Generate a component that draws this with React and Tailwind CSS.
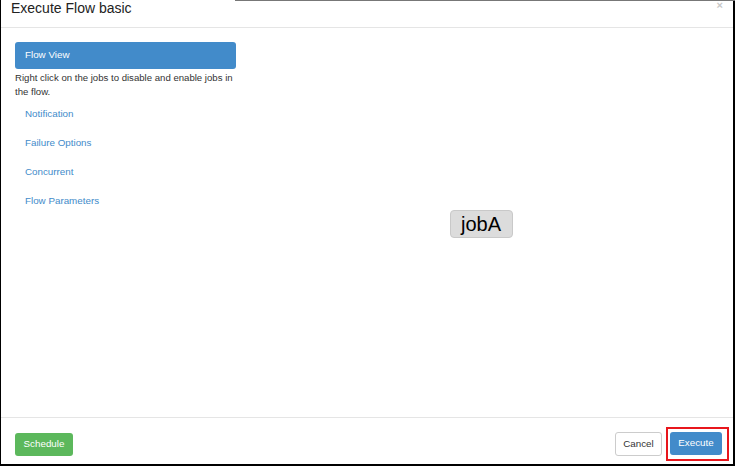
import React from 'react';

const navItems = ['Notification', 'Failure Options', 'Concurrent', 'Flow Parameters'];

export default function App() {
  return (
    <div
      className="w-[735px] h-[467px] bg-white text-[#333] relative"
      style={{ fontFamily: '"Liberation Sans", Arial, sans-serif' }}
    >
      {/* stray top edge of the window behind */}
      <div className="absolute top-0 left-[235px] right-0 h-px bg-[#777]" />

      <div className="h-[466px] flex flex-col border-l border-r-2 border-b-2 border-black">
        {/* Header */}
        <div className="h-[28px] shrink-0 flex items-start justify-between border-b border-[#e5e5e5] pl-[10px] pr-[10px]">
          <h4 className="text-[14px] leading-[14px] pt-[1px] text-[#222]">Execute Flow basic</h4>
          <span className="text-[11px] leading-[11px] font-bold text-[#c8c8c8]">×</span>
        </div>

        {/* Body */}
        <div className="flex-1 flex">
          <div className="w-[235px] shrink-0 pl-[14px] pt-[14px]">
            <div className="h-[27px] w-[221px] flex items-center pl-[10px] rounded-[3px] bg-[#428bca] text-white text-[9.8px]">
              Flow View
            </div>
            <p className="w-[224px] mt-[2px] text-[9.6px] leading-[14px] text-[#333]">
              Right click on the jobs to disable and enable jobs in the flow.
            </p>
            <ul className="mt-px flex flex-col gap-px">
              {navItems.map((item) => (
                <li key={item} className="h-[28px] flex items-center pl-[10px] text-[9.8px] text-[#428bca]">
                  {item}
                </li>
              ))}
            </ul>
          </div>

          {/* Flow graph */}
          <div className="flex-1 flex items-center justify-center pr-[7px] pt-[3px]">
            <div className="w-[63px] h-[28px] flex items-center justify-center rounded-[4px] bg-[#dcdcdc] border border-[#c9c9c9] text-[20px] text-black">
              jobA
            </div>
          </div>
        </div>

        {/* Footer */}
        <div className="h-[47px] shrink-0 border-t border-[#e5e5e5] flex items-start justify-between pl-[14px] pr-[4px] pt-[9px]">
          <div className="h-[34px] flex items-center">
            <button className="h-[23px] w-[58px] rounded-[3px] bg-[#5cb85c] text-white text-[9.8px]">
              Schedule
            </button>
          </div>
          <div className="flex items-center gap-[4px]">
            <button className="h-[24px] w-[47px] rounded-[3px] bg-white border border-[#ccc] text-[#333] text-[9.8px]">
              Cancel
            </button>
            <div className="border-2 border-[#e8161c] pl-[2px] pr-[5px] pt-[3px] pb-[4px]">
              <button className="block h-[23px] w-[52px] rounded-[3px] bg-[#428bca] text-white text-[9.8px]">
                Execute
              </button>
            </div>
          </div>
        </div>
      </div>
    </div>
  );
}
